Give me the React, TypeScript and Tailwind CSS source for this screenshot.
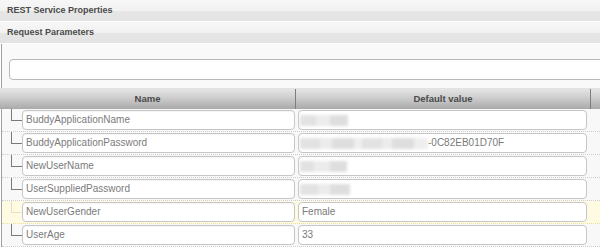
import React from "react";

type Param = { name: string; value?: string; blur?: number[]; suffix?: string; active?: boolean };

const params: Param[] = [
  { name: "BuddyApplicationName", blur: [16, 14, 18] },
  { name: "BuddyApplicationPassword", blur: [20, 12, 22, 8, 20, 10, 22, 14], suffix: "-0C82EB01D70F" },
  { name: "NewUserName", blur: [14, 16, 17] },
  { name: "UserSuppliedPassword", blur: [18, 12, 20] },
  { name: "NewUserGender", value: "Female", active: true },
  { name: "UserAge", value: "33" },
];

const shades = ["bg-[#e2e2e2]", "bg-[#ececec]", "bg-[#dedede]", "bg-[#eeeeee]"];

function Bar({ title }: { title: string }) {
  return (
    <div className="h-[22px] border-b border-white bg-[linear-gradient(#f7f7f7_0%,#f1f1f1_50%,#e6e6e6_51%,#e3e3e3_100%)] pl-[7px] text-[9px] font-bold leading-[21px] text-[#4a4a4a]">
      {title}
    </div>
  );
}

function Row({ p }: { p: Param }) {
  const rowBg = p.active ? "bg-[#fffbe2] border-[#eadfa8]" : "bg-[#f8f8f8] border-[#cfcfcf]";
  const line = p.active ? "border-[#e6dfc4]" : "border-[#7a7a7a]";
  return (
    <div className={`flex h-[23px] border-b border-dotted ${rowBg}`}>
      <div className="flex w-[294px] items-start">
        <div className={`ml-[9px] h-[12px] w-[11px] border-b border-l ${line}`} />
        <div className="mt-px h-[20px] w-[273px] rounded-[4px] border border-[#c6c6c6] bg-white pl-[3px] text-[10px] leading-[18px] text-[#7b7b7b] shadow-[inset_0_1px_1px_rgba(0,0,0,0.04)]">
          {p.name}
        </div>
      </div>
      <div className="flex w-[294px] items-start">
        <div className="mt-px ml-[2px] flex h-[20px] w-[289px] items-center rounded-[4px] border border-[#c6c6c6] bg-white pl-px text-[10px] leading-[18px] text-[#7b7b7b]">
          {p.blur ? (
            <span className="flex h-[11px] items-stretch blur-[1.5px]">
              {p.blur.map((w, i) => (
                <span key={i} className={shades[i % shades.length]} style={{ width: w }} />
              ))}
            </span>
          ) : (
            <span className="pl-[2px]">{p.value}</span>
          )}
          {p.suffix && <span>{p.suffix}</span>}
        </div>
      </div>
      <div className="flex-1" />
    </div>
  );
}

export default function App() {
  return (
    <div className="h-[247px] w-[600px] overflow-hidden bg-white font-['Liberation_Sans',Arial,sans-serif]">
      <Bar title="REST Service Properties" />
      <Bar title="Request Parameters" />
      <div className="ml-px h-[44px] border-l border-[#a0a0a0] bg-[#f9f9f9] pt-[15px]">
        <div className="ml-[7px] h-[21px] w-[620px] rounded-[4px] border border-[#b8b8b8] bg-white" />
      </div>
      <div className="flex h-[21px] border-t border-[#e2e2e2] bg-[linear-gradient(#e4e4e4,#cdcdcd_45%,#a9a9a9)] text-[9.5px] font-bold leading-[20px] text-[#4a4a4a]">
        <div className="w-[296px] border-r border-[#7d7d7d] text-center">Name</div>
        <div className="w-[295px] border-r border-[#7d7d7d] text-center">Default value</div>
        <div className="flex-1" />
      </div>
      <div className="ml-px border-l border-[#a0a0a0]">
        {params.map((p) => (
          <Row key={p.name} p={p} />
        ))}
      </div>
    </div>
  );
}
